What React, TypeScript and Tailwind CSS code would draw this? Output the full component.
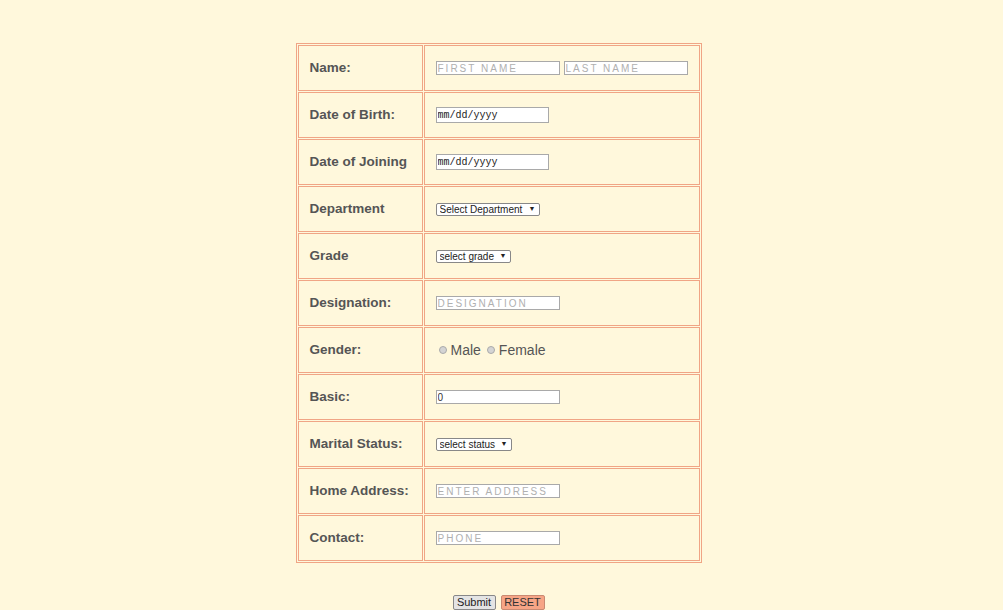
const labelCls = "border border-[#f0a585] pl-[11px] text-left align-middle text-[13.5px] font-bold text-[#555]";
const fieldCls = "border border-[#f0a585] pl-[11px] align-middle";
const textInput =
  "h-[14px] w-[124px] border border-[#a9a9a9] bg-white px-[1px] text-[10px] tracking-[2px] text-[#333] outline-none placeholder:text-[#b0b0b0] placeholder:uppercase";
const dateInput =
  "h-[16px] w-[113px] border border-[#a9a9a9] bg-white px-[1px] font-['Liberation_Mono',monospace] text-[10px] text-[#222] outline-none";

type Row = { label: string; field: React.ReactNode };

const Select = ({ text, width }: { text: string; width: string }) => (
  <span className={`relative inline-flex h-[13px] items-center rounded-[2px] border border-[#888] bg-white ${width}`}>
    <select className="h-full w-full appearance-none bg-transparent pl-[3px] text-[10px] leading-[11px] text-[#222] outline-none">
      <option>{text}</option>
    </select>
    <span className="pointer-events-none absolute right-[3px] top-[0px] text-[7px] text-[#222]">▼</span>
  </span>
);

const Radio = ({ label }: { label: string }) => (
  <label className="mr-[6px] inline-flex items-center gap-[4px] text-[14px] text-[#555]">
    <input
      type="radio"
      name="gender"
      className="h-[8px] w-[8px] appearance-none rounded-full border border-[#aaa] bg-[#d4d4d4]"
    />
    {label}
  </label>
);

const rows: Row[] = [
  {
    label: "Name:",
    field: (
      <div className="flex gap-[4px]">
        <input className={textInput} placeholder="First Name" />
        <input className={textInput} placeholder="Last Name" />
      </div>
    ),
  },
  { label: "Date of Birth:", field: <input className={dateInput} readOnly value="mm/dd/yyyy" /> },
  { label: "Date of Joining", field: <input className={dateInput} readOnly value="mm/dd/yyyy" /> },
  { label: "Department", field: <Select text="Select Department" width="w-[104px]" /> },
  { label: "Grade", field: <Select text="select grade" width="w-[75px]" /> },
  { label: "Designation:", field: <input className={textInput} placeholder="Designation" /> },
  {
    label: "Gender:",
    field: (
      <div className="flex items-center pl-[3px]">
        <Radio label="Male" />
        <Radio label="Female" />
      </div>
    ),
  },
  {
    label: "Basic:",
    field: <input className={`${textInput} tracking-normal text-[#111]`} defaultValue="0" />,
  },
  { label: "Marital Status:", field: <Select text="select status" width="w-[76px]" /> },
  { label: "Home Address:", field: <input className={textInput} placeholder="Enter Address" /> },
  { label: "Contact:", field: <input className={textInput} placeholder="Phone" /> },
];

export default function App() {
  return (
    <div className="min-h-[610px] w-full bg-[#fff8dc] pt-[43px] font-['Liberation_Sans',Arial,sans-serif]">
      <form className="flex flex-col items-center">
        <table className="mr-[6px] w-[406px] border-separate border-spacing-[1px] border border-[#f0a585]">
          <tbody>
            {rows.map((r) => (
              <tr key={r.label} className="h-[46px]">
                <td className={`${labelCls} w-[125px]`}>{r.label}</td>
                <td className={fieldCls}>
                  <div className="flex items-center">{r.field}</div>
                </td>
              </tr>
            ))}
          </tbody>
        </table>
        <div className="mr-[6px] mt-[32px] flex gap-[5px]">
          <button
            type="submit"
            className="h-[15px] w-[43px] rounded-[2px] border border-[#888] bg-[#e4e4e4] text-[11px] leading-[13px] text-[#222]"
          >
            Submit
          </button>
          <button
            type="reset"
            className="h-[15px] w-[44px] rounded-[2px] border border-[#c98a72] bg-[#f7a586] text-[11px] leading-[13px] text-[#333]"
          >
            RESET
          </button>
        </div>
      </form>
    </div>
  );
}
